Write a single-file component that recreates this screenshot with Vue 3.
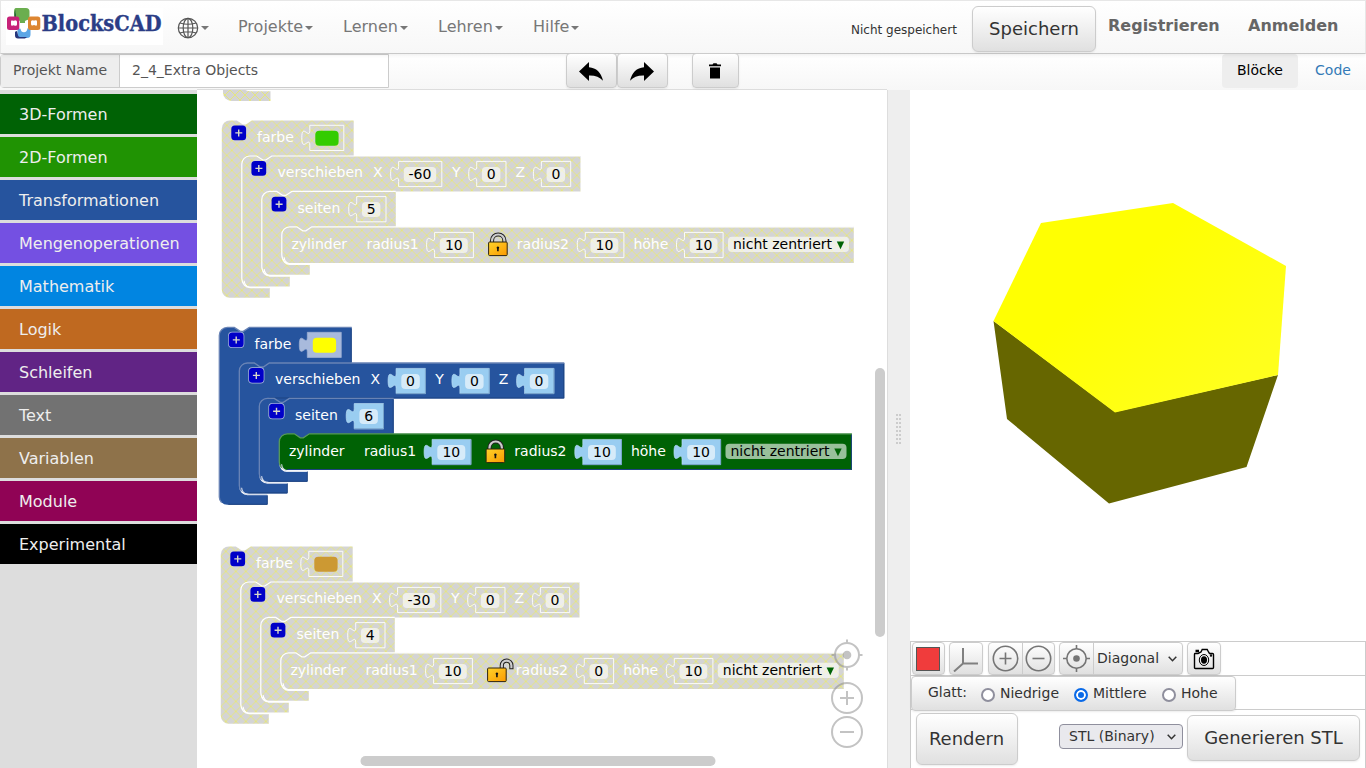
<script setup>
const menus = [
  { label: 'Projekte', w: 105 },
  { label: 'Lernen', w: 95 },
  { label: 'Lehren', w: 95 },
  { label: 'Hilfe', w: 80 },
]

const categories = [
  { label: '3D-Formen', color: '#006205' },
  { label: '2D-Formen', color: '#209303' },
  { label: 'Transformationen', color: '#26549e' },
  { label: 'Mengenoperationen', color: '#7450e2' },
  { label: 'Mathematik', color: '#0185e1' },
  { label: 'Logik', color: '#bf6920' },
  { label: 'Schleifen', color: '#612485' },
  { label: 'Text', color: '#727272' },
  { label: 'Variablen', color: '#8e724a' },
  { label: 'Module', color: '#900355' },
  { label: 'Experimental', color: '#000000' },
]

// Closed outline of a C-shaped block whose mouth holds the next block.
function cShape(x, y, right, foot, bottom) {
  const innerBottom = bottom - 9.8
  const ix = x + 20
  return `M${x},${y + 8} a8,8 0 0 1 8,-8 h7 l6,4 h3 l6,-4 H${right} v35.5 H${ix + 30}` +
    ` l-6,4 h-3 l-6,-4 h-7 a8,8 0 0 0 -8,8 V${innerBottom - 8} a8,8 0 0 0 8,8` +
    ` H${foot} V${bottom} H${x + 8} a8,8 0 0 1 -8,-8 z`
}
function flatShape(x, y, right, bottom) {
  return `M${x},${y + 8} a8,8 0 0 1 8,-8 h7 l6,4 h3 l6,-4 H${right} V${bottom} H${x + 8} a8,8 0 0 1 -8,-8 z`
}
// Top and left edge of a block, including its notch.
function edge(x, y, right, bottom) {
  return `M${x + 2.3},${bottom - 2.3} A8,8 0 0 1 ${x},${bottom - 8} V${y + 8} a8,8 0 0 1 8,-8 h7 l6,4 h3 l6,-4 H${right}`
}
function lip(x, bottom, foot) {
  return `M${x + 2.3},${bottom - 5.7} A8,8 0 0 0 ${x + 8},${bottom + 1.2} H${foot}`
}
function socket(x, y, w) {
  return `M${x},${y} h${w} v25.2 h${-w} v-5.2 c0,-10 -8,8 -8,-7.5 s8,2.5 8,-7.5 z`
}

function makeStack({ x, y, disabled, swatch, coords, sides, r2, open, rights }) {
  const s = coords[0].length === 1 ? 14.3 : 0
  const d = r2.length === 1 ? 9.2 : 0
  return {
    x, y, disabled, swatch, open,
    shapes: [
      { d: cShape(0, 0, rights[0], 48, 177.4), fill: '#26549e' },
      { d: cShape(20, 35.6, rights[1], 68, 166), fill: '#26549e' },
      { d: cShape(40, 71, rights[2], 88, 154.4), fill: '#26549e' },
      { d: flatShape(60, 106.4, rights[3], 142.6), fill: '#006205' },
    ],
    edges: [
      edge(0, 0, rights[0], 177.4), edge(20, 35.6, rights[1], 166),
      edge(40, 71, rights[2], 154.4), edge(60, 106.4, rights[3], 142.6),
    ],
    shades: [
      `M${rights[0] - 0.5},1 V35`, `M50,70.6 H${rights[1] - 0.5} V36`, `M${rights[2] - 0.5},72 V106`,
      `M68,142.1 H${rights[3] - 0.5} V107`, 'M49,153.9 H88 V144', 'M29,165.5 H68 V156', 'M9,176.9 H48 V168',
    ],
    lips: [lip(20, 166, 48), lip(40, 154.4, 68), lip(60, 142.6, 88)],
    plus: [[9.5, 5.1], [29.6, 40.6], [49.8, 76.4]],
    labels: [
      { t: 'farbe', x: 35.3, y: 21.6 },
      { t: 'verschieben', x: 55.7, y: 57.1 },
      { t: 'X', x: 151.2, y: 57.1 },
      { t: 'Y', x: 230.2 - s, y: 57.1 },
      { t: 'Z', x: 293.8 - s, y: 57.1 },
      { t: 'seiten', x: 75.7, y: 92.4 },
      { t: 'zylinder', x: 69.7, y: 128.2 },
      { t: 'radius1', x: 144.6, y: 128.2 },
      { t: 'radius2', x: 295, y: 128.2 },
      { t: 'höhe', x: 411.6 - d, y: 128.2 },
    ],
    values: [
      { t: coords[0], x: 176.8, y: 41, w: s ? 29.3 : 43.2 },
      { t: coords[1], x: 254.9 - s, y: 41, w: 29.3 },
      { t: coords[2], x: 319.6 - s, y: 41, w: 29.3 },
      { t: sides, x: 134.9, y: 76.2, w: 29.3 },
      { t: '10', x: 212.8, y: 112, w: 38.8 },
      { t: r2, x: 363.5, y: 112, w: d ? 29.3 : 38.6 },
      { t: '10', x: 462.7 - d, y: 112, w: 38.6 },
    ],
    drop: 506.2 - d,
  }
}

const stacks = [
  makeStack({ x: 221.8, y: 120.4, disabled: true, swatch: '#33cc00', coords: ['-60', '0', '0'], sides: '5', r2: '10', rights: [131.9, 358.7, 174, 632] }),
  makeStack({ x: 219.3, y: 327.4, disabled: false, swatch: '#ffff00', coords: ['0', '0', '0'], sides: '6', r2: '10', rights: [132.4, 345, 174.4, 632.6] }),
  makeStack({ x: 220.8, y: 546.4, disabled: true, swatch: '#cc9933', coords: ['-30', '0', '0'], sides: '4', r2: '0', open: true, rights: [131.9, 358.7, 174, 623] }),
]

const gripRows = [0, 1, 2, 3, 4, 5, 6, 7]
</script>

<template>
  <div class="app">
    <header class="topbar">
      <svg class="logo" width="157" height="37" viewBox="6 8 157 37">
        <rect x="6" y="8" width="157" height="37" fill="#fff" />
        <path d="M17 8h9q3.500 0 3.500 3.500v6q0 2.500-2.500 2.500l-2 1v2h-5v-2l-2-1q-2.500 0-2.500-2.500l-1.500-1v-5q0-3.500 2-3.500z" fill="#6bae4f" />
        <path d="M16 9.500q-1.500 3 0 5v5l-1.500-1.500v-6z" fill="#27643b" />
        <path d="M17.500 29.500q0-1 1.500-1l1.500.2q.5 3.500 3.500 3.500t3.500-4l1.500.2q1.500 0 1.500 1.500v4.500q0 3.500-3.500 3.500h-7q-3 0-2.500-3z" fill="#5ba6e6" />
        <path d="M17 31q-2 .3-2 1v3.500q0 3 3 3h7l2-1.500h-6q-3 0-3-2z" fill="#27377c" />
        <rect x="7" y="16.500" width="12.300" height="13.500" rx="2.500" fill="#c72279" />
        <rect x="28" y="16.500" width="12.300" height="13.500" rx="2.500" fill="#dd8631" />
        <path d="M12 20.200q1.500 1 3 0 2 0 2 1.500v2.700q0 1.600-2 1.300-1.500-1-3 0-1 0-1-1.500v-2.800q0-1 1-1.200zM32.500 20.200q1.500.8 3 0 1.500-.2 1.500 1.200v3q0 1.500-1.500 1.200-1.500-1-3 0-1.500 0-1.500-1.500v-2.700q0-1 1.500-1.200z" fill="#fff" />
        <text x="41.500" y="31.300" textLength="120" lengthAdjust="spacingAndGlyphs" class="wordmark">BlocksCAD</text>
      </svg>
      <div class="lang">
        <svg width="22" height="22" viewBox="0 0 22 22" fill="none" stroke="#555" stroke-width="1.200">
          <circle cx="11" cy="11" r="9.700" />
          <ellipse cx="11" cy="11" rx="4.800" ry="9.700" />
          <path d="M11 1.300v19.400M1.300 11h19.400M3 6q8 2.500 16 0M3 16q8-2.500 16 0" />
        </svg>
        <i class="caret"></i>
      </div>
      <nav class="menus">
        <a v-for="m in menus" :key="m.label" :style="{ width: m.w + 'px' }">{{ m.label }}<i class="caret"></i></a>
      </nav>
      <div class="account">
        <span class="status">Nicht gespeichert</span>
        <button class="btn save">Speichern</button>
        <b class="register">Registrieren</b>
        <b class="login">Anmelden</b>
      </div>
    </header>

    <div class="toolbar">
      <div class="project">
        <span class="project-label">Projekt Name</span>
        <span class="project-name">2_4_Extra Objects</span>
      </div>
      <div class="edit">
        <button class="btn undo">
          <svg width="24" height="19" viewBox="0 0 24 19"><path d="M0 9.500 10 0v5.200Q21 6 24 18.700 19 13.200 10 13.500V19z" /></svg>
        </button>
        <button class="btn redo">
          <svg width="24" height="19" viewBox="0 0 24 19"><path d="M24 9.500 14 0v5.200Q3 6 0 18.700 5 13.200 14 13.500V19z" /></svg>
        </button>
        <button class="btn trash">
          <svg width="12" height="16" viewBox="0 0 12 16"><path d="M0 1.500h3.500L4.500.300h3l1 1.200H12v1.800H0zM1 4.500h10V15.500H1z" /></svg>
        </button>
      </div>
      <div class="tabs">
        <span class="tab active">Blöcke</span>
        <span class="tab code">Code</span>
      </div>
    </div>

    <main class="main">
      <aside class="sidebar">
        <div v-for="c in categories" :key="c.label" class="cat" :style="{ background: c.color }">{{ c.label }}</div>
      </aside>

      <section class="workspace">
        <svg width="690" height="678" viewBox="197 90 690 678">
          <defs>
            <pattern id="hatch" width="10" height="10" patternUnits="userSpaceOnUse">
              <rect width="10" height="10" fill="#aaa" />
              <path d="M0 0L10 10M10 0L0 10" stroke="#cc0" />
            </pattern>
            <linearGradient id="brass" x1="0" y1="0" x2="1" y2="1">
              <stop offset="0" stop-color="#ffd32a" /><stop offset="1" stop-color="#fa9a00" />
            </linearGradient>
            <g id="plus">
              <rect width="14.800" height="14.800" rx="3.500" fill="#0000c8" />
              <path d="M4 7.400h7M7.400 3.900v7" stroke="#d9d9c8" stroke-width="1.400" />
            </g>
          </defs>

          <path class="hatched" d="M223 88h47.500v13h-39a8.500 8.500 0 0 1-8.500-8.500z" />
          <path d="M245 89q3 2 8 1.500h33" stroke="#fff" fill="none" stroke-width="1.500" />

          <g v-for="s in stacks" :key="s.y" :transform="`translate(${s.x} ${s.y})`" :class="{ off: s.disabled }">
            <path v-for="(p, i) in s.shapes" :key="i" :d="p.d" :class="{ hatched: s.disabled }" :fill="p.fill" />
            <template v-if="!s.disabled">
              <path v-for="d in s.shades" :key="d" :d="d" class="shade" />
              <path v-for="(d, i) in s.edges" :key="d" :d="d" class="light" :class="{ green: i === 3 }" />
              <path v-for="d in s.lips" :key="d" :d="d" class="lip" />
            </template>
            <template v-else>
              <path v-for="d in s.edges.slice(1)" :key="d" :d="d" class="seam" />
              <path v-for="d in s.lips" :key="d" :d="d" class="seam" />
            </template>

            <g v-for="p in s.plus" :key="p[1]" :transform="`translate(${p[0]} ${p[1]})`">
              <rect v-if="!s.disabled" x="-.7" y="-.7" width="16.200" height="16.200" rx="4" fill="#a9b8dc" />
              <use href="#plus" />
            </g>

            <path :d="socket(88, 4.900, 34)" class="plug tint" />
            <rect x="93.500" y="10.400" width="23.300" height="15" rx="4" :fill="s.swatch" />

            <text v-for="l in s.labels" :key="l.t" :x="l.x" :y="l.y" class="label">{{ l.t }}</text>

            <g v-for="(v, i) in s.values" :key="i">
              <path :d="socket(v.x, v.y, v.w)" class="plug" />
              <path v-if="!s.disabled" :d="`M${v.x},${v.y + 25.200} h${v.w} v-25.200`" class="plug-edge" />
              <rect :x="v.x + 5.200" :y="v.y + 5.500" :width="v.w - 10.800" height="15" rx="4" class="field" />
              <text :x="v.x + v.w / 2 - .2" :y="v.y + 17.500" class="number">{{ v.t }}</text>
            </g>

            <g transform="translate(266.200 111.800)">
              <path v-if="!s.open" d="M4 12V8.500a6.200 6.200 0 0 1 12.400 0V12" fill="none" stroke="#222" stroke-width="4.200" />
              <path v-if="!s.open" d="M4 12V8.500a6.200 6.200 0 0 1 12.400 0V12" fill="none" stroke="#ccc" stroke-width="2.200" />
              <path v-if="s.open" d="M14.800 11V7.200a4.800 4.800 0 0 1 9.600 0v3.800" fill="none" stroke="#222" stroke-width="4.200" />
              <path v-if="s.open" d="M14.800 10.500V7.200a4.800 4.800 0 0 1 9.600 0v2.800" fill="none" stroke="#ccc" stroke-width="2.200" />
              <rect x=".6" y="9.800" width="18.600" height="13.600" rx="1" fill="url(#brass)" stroke="#2e2410" />
              <path d="M9.900 14.300a1.300 1.300 0 0 1 .8 2.300v2.500H9.100v-2.500a1.300 1.300 0 0 1 .8-2.300z" fill="#111" />
            </g>

            <rect :x="s.drop" y="116.400" width="121" height="15.200" rx="4" class="dropdown" />
            <text :x="s.drop + 5" y="128.200" class="choice">nicht zentriert</text>
            <path :d="`M${s.drop + 108.800} 121.200h7.400l-3.700 7.600z`" class="arrow-mark" />
          </g>

          <rect x="875" y="368" width="10" height="269" rx="5" fill="#ccc" />
          <rect x="360.500" y="756" width="355" height="10" rx="5" fill="#ccc" />

          <g fill="none" stroke="#888" stroke-width="2" opacity=".5">
            <circle cx="847" cy="655" r="12" />
            <path d="M847 639.500v4M847 667v3.500M831.500 655h4M859 655h3.500" />
            <circle cx="847" cy="655" r="4.300" fill="#888" stroke="none" />
            <circle cx="847" cy="698" r="15" />
            <path d="M840 698h14M847 691v14" />
            <circle cx="847" cy="732" r="15" />
            <path d="M840 732h14" />
          </g>
        </svg>
      </section>

      <div class="divider">
        <div class="grip"><template v-for="r in gripRows" :key="r"><i></i><i></i></template></div>
      </div>

      <section class="viewer">
        <svg class="scene" width="456" height="551" viewBox="910 90 456 551">
          <defs>
            <linearGradient id="top-face" gradientUnits="userSpaceOnUse" x1="1100" y1="290" x2="1200" y2="410">
              <stop offset="0" stop-color="#ffff02" /><stop offset="1" stop-color="#ffff1c" />
            </linearGradient>
          </defs>
          <path d="M993.500 321 1115 412 1278 375 1246.500 467 1109 503.500 1007 419z" fill="#666600" />
          <path d="M1041 223 1173 203 1286 266 1278 375 1115 412.500 993.500 321z" fill="url(#top-face)" />
        </svg>
        <div class="panel">
          <div class="row tools">
            <button class="btn tool"><i class="red"></i></button>
            <button class="btn tool axes">
              <svg width="26" height="24" viewBox="0 0 26 24" fill="none" stroke="#808080" stroke-width="2"><path d="M10 0v15.500h15M10 15.500 1 23.500" /></svg>
            </button>
            <span class="btn group zooms">
              <span><svg width="27" height="27" viewBox="0 0 27 27"><circle cx="13.500" cy="13.500" r="12.200" /><path d="M7.500 13.500h12M13.500 7.500v12" /></svg></span>
              <span><svg width="27" height="27" viewBox="0 0 27 27"><circle cx="13.500" cy="13.500" r="12.200" /><path d="M7.500 13.500h12" /></svg></span>
            </span>
            <span class="btn group view">
              <span><svg width="27" height="27" viewBox="0 0 27 27"><circle cx="13.500" cy="13.500" r="9.700" /><circle cx="13.500" cy="13.500" r="3.300" class="dot" /><path d="M13.500 0v4M13.500 23v4M0 13.500h4M23 13.500h4" /></svg></span>
              <span class="select">Diagonal<svg class="chev" width="9" height="6" viewBox="0 0 9 6"><path d="M.7.7 4.500 4.700 8.300.7" /></svg></span>
            </span>
            <button class="btn tool camera">
              <svg width="22" height="22" viewBox="0 0 22 22" fill="none" stroke="#000" stroke-width="1.400">
                <path d="M1.700 5.500H5L8 4l1.200-2.500h5L15.500 4l1 1.500h3q1 0 1 1v13q0 1-1 1h-17q-1 0-1-1v-13q0-1 .2-1z" />
                <ellipse cx="11" cy="12" rx="4.700" ry="5.500" stroke-width="1" />
                <ellipse cx="11" cy="12" rx="2.300" ry="3" fill="#000" />
                <path d="M2.500 3h3.500" stroke-width="2.500" />
                <circle cx="18" cy="7.500" r=".5" />
              </svg>
            </button>
          </div>
          <div class="row smooth">
            <div class="btn smooth-box">
              <span class="glatt">Glatt:</span>
              <label class="low"><i class="radio"></i>Niedrige</label>
              <label class="mid"><i class="radio on"></i>Mittlere</label>
              <label class="high"><i class="radio"></i>Hohe</label>
            </div>
          </div>
          <div class="row actions">
            <button class="btn big render">Rendern</button>
            <span class="format">STL (Binary)<svg class="chev" width="9" height="6" viewBox="0 0 9 6"><path d="M.7.7 4.500 4.700 8.300.7" /></svg></span>
            <button class="btn big generate">Generieren STL</button>
          </div>
        </div>
      </section>
    </main>
  </div>
</template>

<style>
body { margin: 0; overflow: hidden; }
</style>

<style scoped>
.app, .app * { box-sizing: border-box; }
.app {
  width: 1366px; height: 768px; overflow: hidden; background: #fff; color: #333;
  font-family: "DejaVu Sans", sans-serif; font-size: 14px;
  display: flex; flex-direction: column;
}
.btn {
  font-family: inherit; color: #333; padding: 0; margin: 0; border: 1px solid #ccc; border-radius: 4px;
  background: linear-gradient(#fff, #e0e0e0); box-shadow: 0 1px 2px rgba(0, 0, 0, .075);
  display: flex; align-items: center; justify-content: center;
}
.topbar {
  height: 54px; flex: none; display: flex; border: 1px solid #e7e7e7; border-bottom: 1px solid #c8c8c8;
  background: linear-gradient(#fff, #f7f7f7); position: relative; box-shadow: 0 1px 4px rgba(0, 0, 0, .08);
}
.logo { margin: 7px 0 0 5px; flex: none; overflow: visible; }
.wordmark { font-family: "DejaVu Serif", serif; font-weight: bold; font-size: 22.5px; fill: #2b3d86; stroke: #2b3d86; stroke-width: .4; }
.lang { display: flex; align-items: center; margin: 16px 0 0 14px; height: 22px; width: 32px; flex: none; }
.caret { display: inline-block; border: 4px solid transparent; border-top-color: #777; border-bottom: 0; margin-left: 2px; vertical-align: middle; }
.menus { display: flex; margin-left: 29px; padding-top: 16px; font-size: 16px; line-height: 20px; color: #777; }
.menus a { flex: none; white-space: nowrap; }
.account { margin-left: auto; display: flex; width: 514px; flex: none; }
.status { font-size: 12px; line-height: 16px; margin-top: 21px; width: 121px; white-space: nowrap; }
.save { width: 124px; height: 46px; margin-top: 5px; font-size: 18px; border-radius: 6px; padding-bottom: 2px; }
.account b { font-size: 16px; line-height: 20px; color: #666; margin-top: 15px; }
.register { margin-left: 12px; width: 140px; }

.toolbar {
  height: 36px; flex: none; display: flex; background: linear-gradient(#fff, #f7f7f7);
}
.project { display: flex; width: 389px; height: 34px; border: 1px solid #ccc; border-radius: 4px 0 0 4px; color: #555; line-height: 30px; background: #fff; }
.project-label { width: 119px; padding-left: 12px; background: #eee; border-right: 1px solid #ccc; }
.project-name { padding-left: 12px; }
.edit { display: flex; margin-left: 177px; }
.edit .btn { height: 35px; margin-top: -1px; width: 51px; padding-right: 1px; position: relative; }
.edit svg { margin-top: 2px; }
.edit .trash { width: 47px; margin-left: 24px; }
.edit .trash svg { margin-top: 0; }
.tabs { margin-left: auto; display: flex; line-height: 33px; }
.tab { height: 34px; width: 76px; text-align: center; }
.tab.active { background: #eee; border-radius: 4px; color: #000; }
.tab.code { width: 68px; color: #337ab7; padding-left: 2px; }

.main { flex: 1; display: flex; min-height: 0; }
.sidebar { width: 197px; flex: none; background: #ddd; padding-top: 4px; display: flex; flex-direction: column; gap: 3px; }
.cat { height: 40px; line-height: 42px; padding-left: 19px; font-size: 16px; color: #eee; }
.workspace { width: 690px; flex: none; box-shadow: 0 -1px #ddd; overflow: hidden; }
.workspace svg { display: block; }
.divider { width: 23px; flex: none; background: #eee; border-left: 1px solid #ddd; padding-left: 8px; }
.grip { display: grid; grid-template-columns: 2px 2px; gap: 2px 1px; grid-auto-rows: 2px; margin-top: 324px; width: 5px; height: 31px; }
.grip i { background: #ccc; }

.hatched { fill: url(#hatch); fill-opacity: .5; }
.seam { fill: none; stroke: #fff; stroke-width: 1.2; }
.light { fill: none; stroke: #6883b5; stroke-width: 1.3; }
.light.green { stroke: #579a59; }
.lip { fill: none; stroke: #d4dceb; stroke-width: 1.1; }
.shade { fill: none; stroke: #1d4381; stroke-width: 1; }
.label { font-size: 14px; fill: #fff; }
.plug { fill: #99cdf1; stroke: #b9ddf5; stroke-width: .7; }
.plug.tint { fill: #a8badc; stroke: #9fb0d2; }
.plug-edge { fill: none; stroke: #76a2ca; stroke-width: 1; }
.off .plug { fill: none; stroke: #fff; stroke-opacity: .9; stroke-width: 1; }
.field { fill: #fff; fill-opacity: .6; }
.number { font-size: 14px; fill: #000; text-anchor: middle; }
.dropdown { fill: #fff; fill-opacity: .6; }
.choice { font-size: 14px; fill: #000; }
.arrow-mark { fill: #006205; }

.viewer { width: 456px; flex: none; display: flex; flex-direction: column; }
.scene { display: block; flex: none; }
.panel { height: 127px; border: 1px solid #ccc; border-bottom: 0; }
.row { display: flex; border-bottom: 1px solid #ccc; height: 34px; padding-left: 1px; }
.tool { width: 33px; height: 33px; padding-right: 1px; }
.red { width: 24px; height: 24px; background: #f03c3c; border: 1px solid #555; }
.axes { margin-left: 4px; width: 34px; }
.camera { margin-left: 4px; width: 34px; }
.axes svg { margin: 2px 0 0 1px; }
.group { height: 33px; justify-content: flex-start; }
.group > span { height: 31px; display: flex; align-items: center; justify-content: center; width: 33px; flex: none; padding-right: 1px; }
.group > span + span { border-left: 1px solid #ccc; }
.group svg:not(.chev) { fill: none; stroke: #757575; stroke-width: 1.6; }
.group .dot { fill: #757575; stroke: none; }
.zooms { width: 67px; margin-left: 5px; }
.view { width: 124px; margin-left: 4px; }
.group .select { width: 89px; justify-content: flex-start; padding: 0 0 2px 3px; }
.chev { fill: none; stroke: #333; stroke-width: 1.5; flex: none; }
.select .chev { margin: 3px 0 0 9px; }
.smooth { padding-left: 0; }
.smooth-box { width: 325px; height: 35px; justify-content: flex-start; padding: 0 0 2px 16px; position: relative; }
.smooth-box .glatt { width: 53px; padding-bottom: 1px; }
.smooth-box label { display: flex; align-items: center; }
.radio { width: 14px; height: 14px; border: 2px solid #8f8f9d; border-radius: 50%; background: #fff; margin: 4px 5px 0 0; flex: none; }
.radio.on { border-color: #0a6ae8; background: #0a6ae8; box-shadow: inset 0 0 0 2px #fff; }
.low { width: 93px; }
.mid { width: 88px; }
.actions { border: 0; height: 57px; padding-left: 5px; }
.big { font-size: 18px; border-radius: 6px; padding-bottom: 2px; }
.render { width: 102px; height: 52px; margin-top: 3px; padding-right: 1px; }
.format { width: 124px; height: 25px; margin: 14px 0 0 41px; border: 1px solid #8f8f9d; border-radius: 4px; background: #e9e9ed; display: flex; align-items: center; padding: 0 0 2px 9px; white-space: nowrap; }
.format .chev { margin: 3px 0 0 12px; }
.generate { width: 173px; height: 46px; margin: 5px 0 0 4px; }
</style>
